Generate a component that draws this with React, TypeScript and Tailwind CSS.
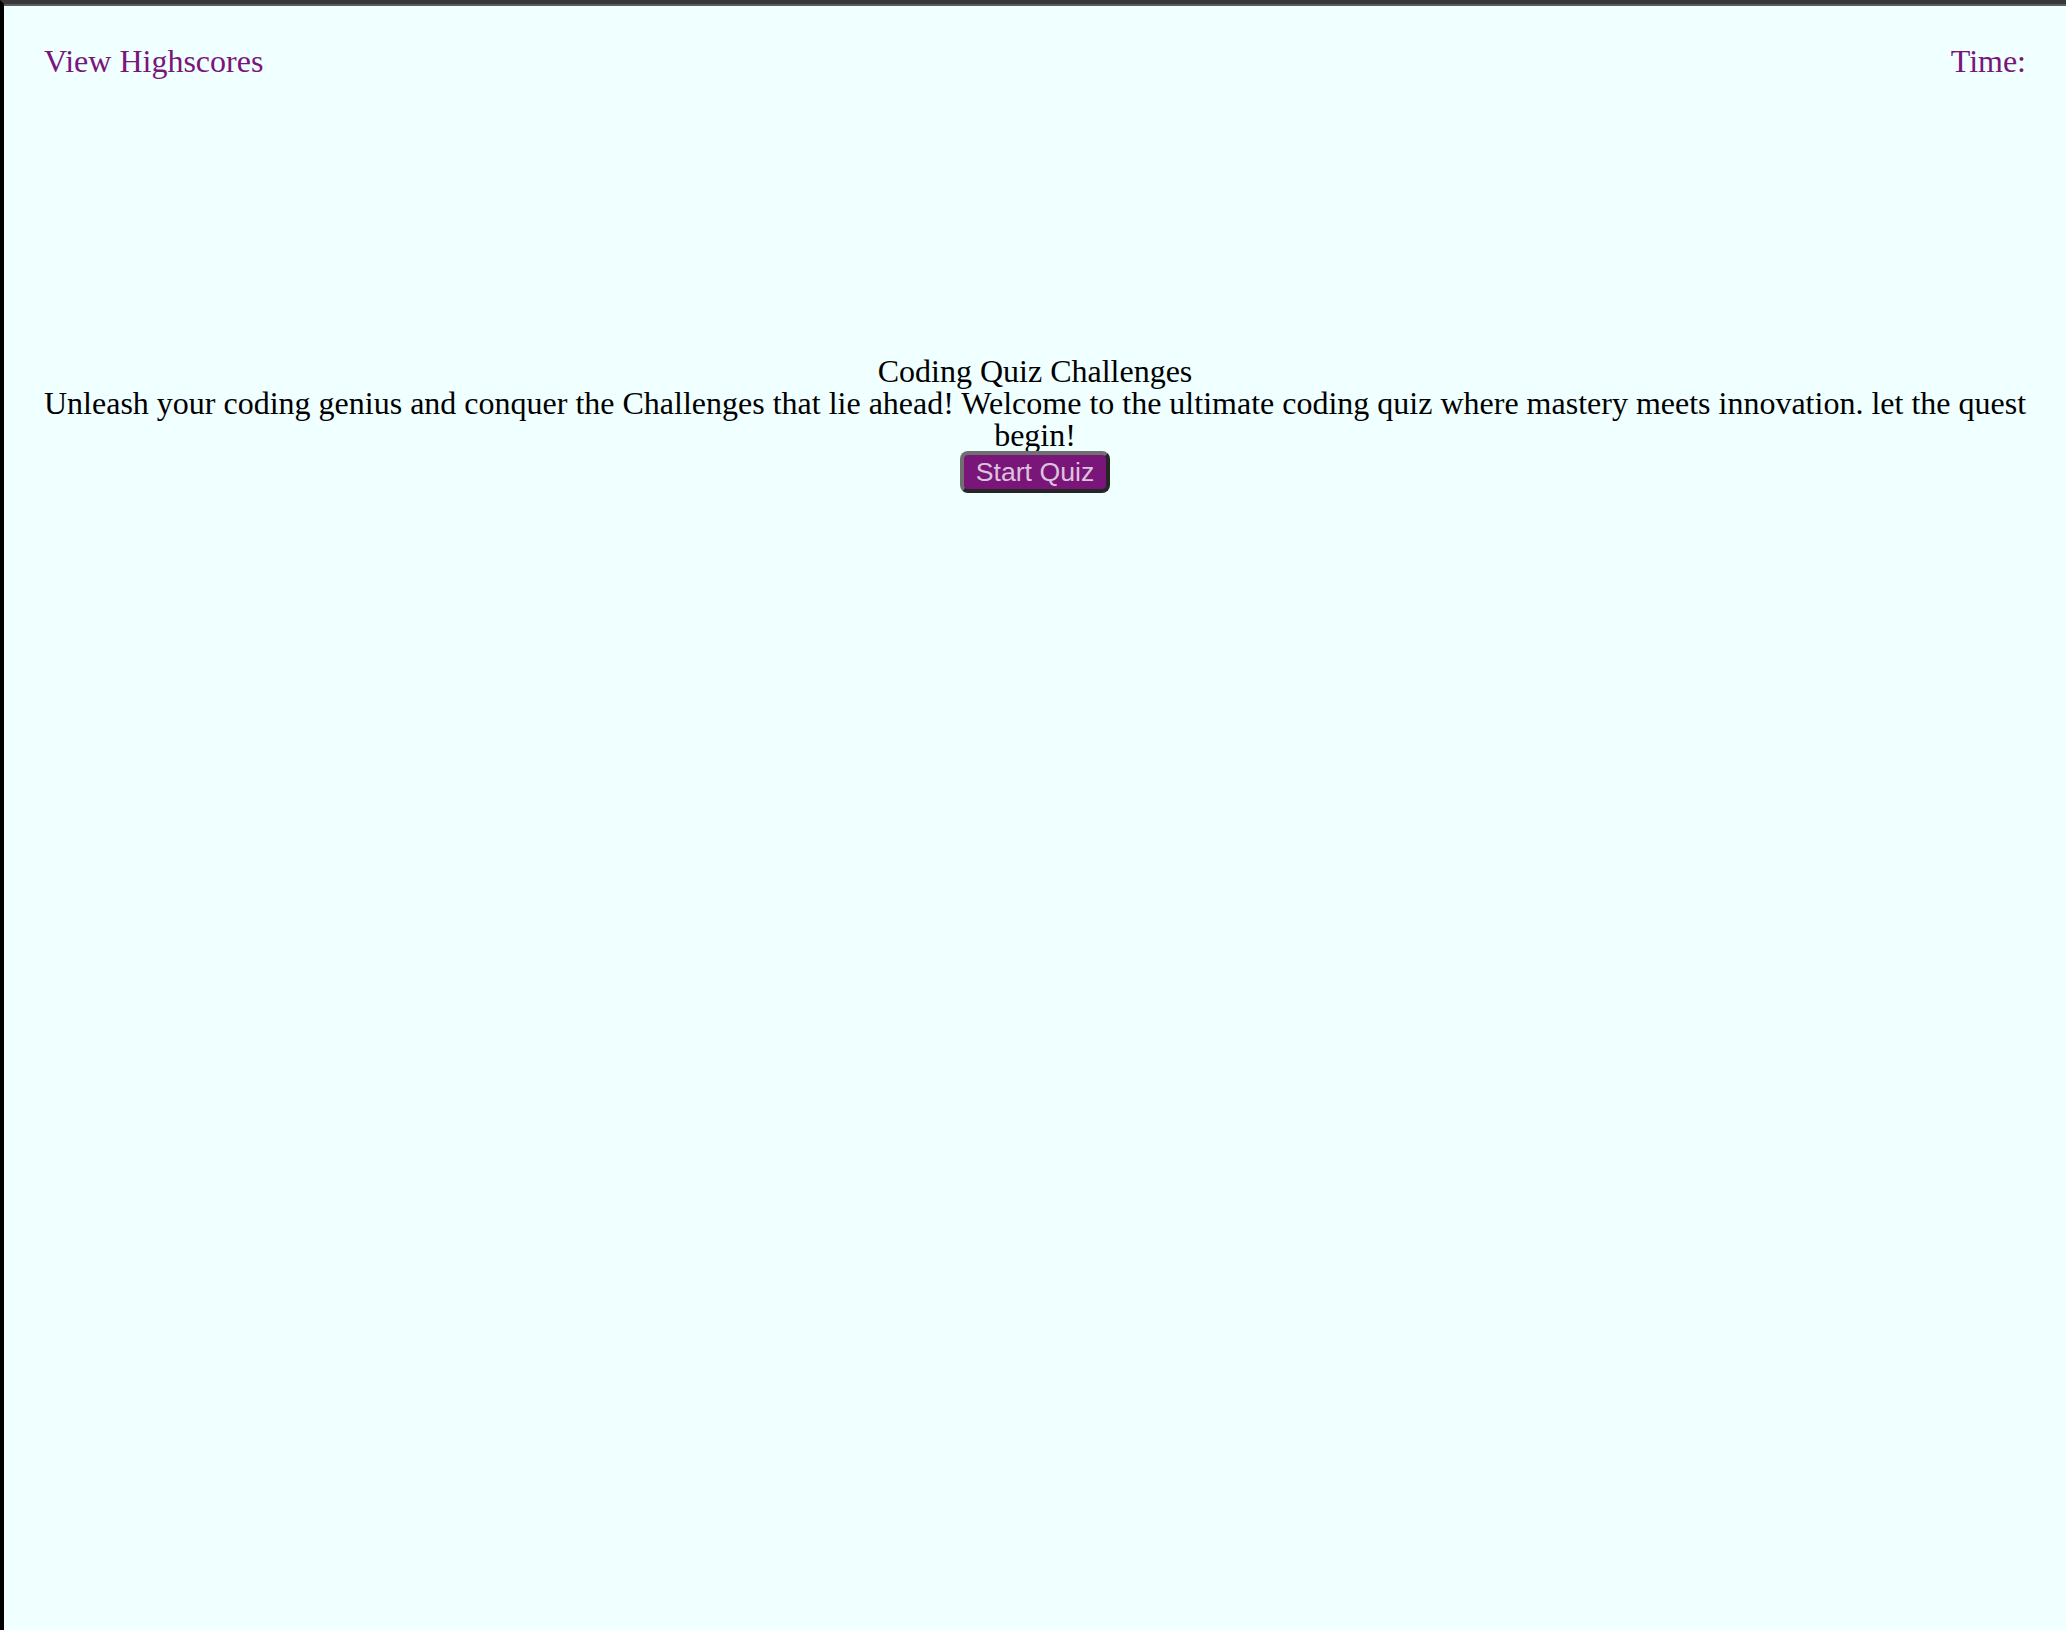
export default function App() {
    return (
        <div className="min-h-screen bg-[#f0ffff] border-l-4 border-l-black border-t-4 border-t-[#38383a] font-['Liberation_Serif','Times_New_Roman',serif] text-[32px] leading-[32px] text-black">
            <div className="h-[2px] bg-[#5c5c5c]" />
            <header className="flex items-start justify-between px-10 pt-[39px] text-[#7a157a]">
                <a className="cursor-pointer">View Highscores</a>
                <span>Time:</span>
            </header>

            <main className="flex flex-col items-center px-[34px] pt-[278px] text-center">
                <h1>Coding Quiz Challenges</h1>
                <p>
                    Unleash your coding genius and conquer the Challenges that lie ahead! Welcome to the ultimate coding
                    quiz where mastery meets innovation. let the quest begin!
                </p>
                <button className="rounded-lg border-4 border-t-[#6f6f6f] border-l-[#6f6f6f] border-b-[#262626] border-r-[#262626] bg-[#7a157a] px-3 py-[2px] font-['Liberation_Sans',Arial,sans-serif] text-[26.67px] leading-[30px] text-[#dcc3dc]">
                    Start Quiz
                </button>
            </main>
        </div>
    );
}
